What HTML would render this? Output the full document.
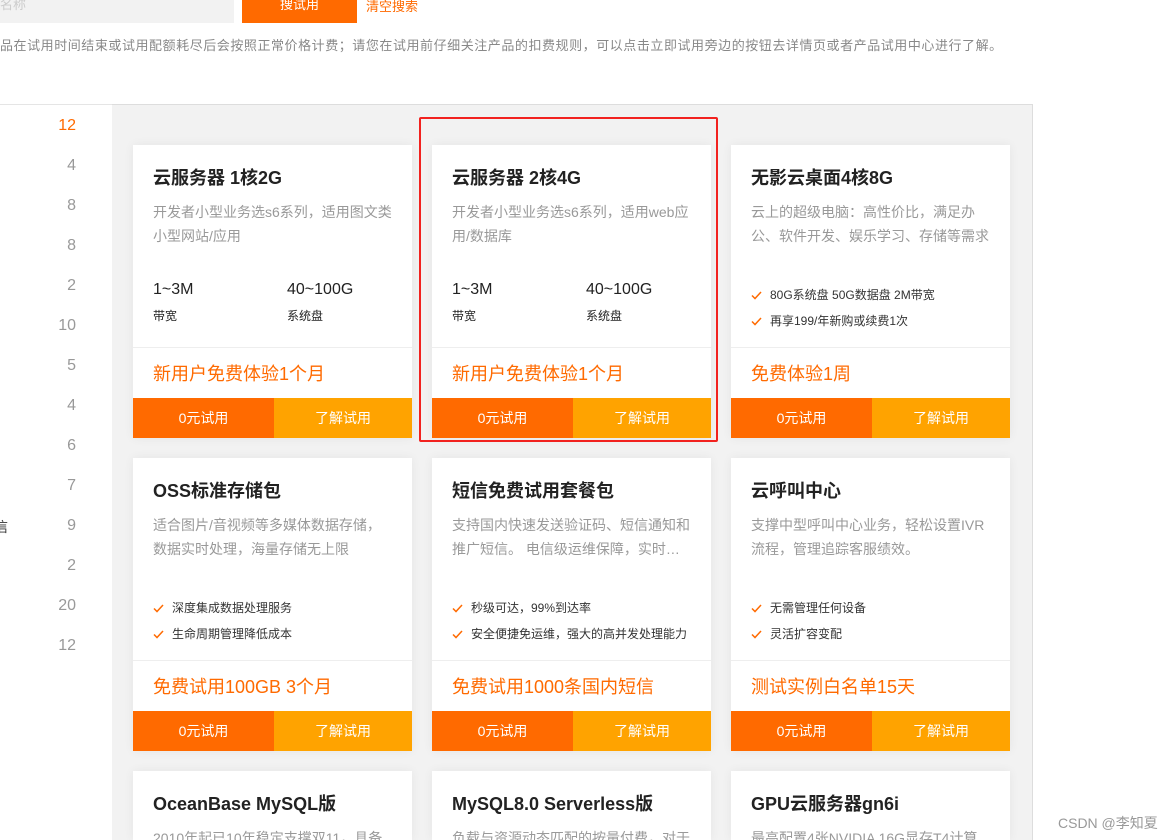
<!DOCTYPE html>
<html style="width:1174px;height:840px;overflow:hidden"><head><meta charset="utf-8"><style>
*{margin:0;padding:0;box-sizing:border-box}
body{width:1174px;height:840px;overflow:hidden;background:#fff;font-family:"Liberation Sans","Noto Sans CJK SC",sans-serif;position:relative}
.abs{position:absolute}
.inp{left:0;top:0;width:234px;height:23px;background:#f2f2f2;color:#ccc;font-size:13px;line-height:10px}
.sbtn{left:242px;top:0;width:115px;height:23px;background:#ff6a00;color:#fff;font-size:13px;text-align:center;line-height:10px}
.clr{left:366px;top:-4px;color:#ff6a00;font-size:13px}
.note{left:0;top:35px;font-size:13px;letter-spacing:0.55px;color:#888;white-space:nowrap}
.side{left:0;top:104px;width:112px;height:736px;background:#fff;border-top:1px solid #e5e5e5}
.num{left:40px;width:36px;text-align:right;font-size:16px;color:#999}
.panel{left:112px;top:104px;width:921px;height:736px;background:#f2f2f2;border-top:1px solid #ddd;border-right:1px solid #ddd}
.card{position:absolute;width:279px;height:293px;background:#fff;box-shadow:0 0 10px rgba(0,0,0,.06)}
.t{position:absolute;left:20px;top:19px;font-size:18px;font-weight:bold;color:#222}
.d{position:absolute;left:20px;top:55px;width:240px;font-size:14px;line-height:24px;color:#999}
.s{position:absolute;top:136px;font-size:16px;color:#222}
.sl{position:absolute;top:162px;font-size:12px;color:#222}
.ck{position:absolute;left:20px;font-size:12px;color:#333;white-space:nowrap}
.ck svg{vertical-align:-1px;margin-right:8px}
.hr{position:absolute;left:0;right:0;top:202px;height:1px;background:#eee}
.p{position:absolute;left:20px;top:215px;font-size:18px;color:#ff6a00}
.b1,.b2{position:absolute;top:253px;height:40px;line-height:40px;color:#fff;font-size:14px;text-align:center}
.b1{left:0;width:141px;background:#ff6a00}
.b2{left:141px;width:138px;background:#ffa300}
.red{left:419px;top:117px;width:299px;height:325px;border:2px solid #f2221f;border-radius:2px}
.wm{left:1058px;top:813px;font-size:14px;color:#999}
</style></head><body>
<div class="abs inp">名称</div>
<div class="abs sbtn">搜试用</div>
<div class="abs clr">清空搜索</div>
<div class="abs note">品在试用时间结束或试用配额耗尽后会按照正常价格计费；请您在试用前仔细关注产品的扣费规则，可以点击立即试用旁边的按钮去详情页或者产品试用中心进行了解。</div>
<div class="abs side"></div>
<div class="abs num" style="top:117px;color:#ff6a00">12</div>
<div class="abs num" style="top:157px">4</div>
<div class="abs num" style="top:197px">8</div>
<div class="abs num" style="top:237px">8</div>
<div class="abs num" style="top:277px">2</div>
<div class="abs num" style="top:317px">10</div>
<div class="abs num" style="top:357px">5</div>
<div class="abs num" style="top:397px">4</div>
<div class="abs num" style="top:437px">6</div>
<div class="abs num" style="top:477px">7</div>
<div class="abs num" style="top:517px">9</div>
<div class="abs num" style="top:557px">2</div>
<div class="abs num" style="top:597px">20</div>
<div class="abs num" style="top:637px">12</div>
<div class="abs" style="left:-6px;top:517px;font-size:14px;color:#333">信</div>
<div class="abs panel"></div>

<div class="card" style="left:133px;top:145px"><div class="t">云服务器 1核2G</div><div class="d">开发者小型业务选s6系列，适用图文类小型网站/应用</div><div class="s" style="left:20px">1~3M</div><div class="s" style="left:154px">40~100G</div><div class="sl" style="left:20px">带宽</div><div class="sl" style="left:154px">系统盘</div><div class="hr"></div><div class="p">新用户免费体验1个月</div><div class="b1">0元试用</div><div class="b2">了解试用</div></div>
<div class="card" style="left:432px;top:145px"><div class="t">云服务器 2核4G</div><div class="d">开发者小型业务选s6系列，适用web应用/数据库</div><div class="s" style="left:20px">1~3M</div><div class="s" style="left:154px">40~100G</div><div class="sl" style="left:20px">带宽</div><div class="sl" style="left:154px">系统盘</div><div class="hr"></div><div class="p">新用户免费体验1个月</div><div class="b1">0元试用</div><div class="b2">了解试用</div></div>
<div class="card" style="left:731px;top:145px"><div class="t">无影云桌面4核8G</div><div class="d">云上的超级电脑：高性价比，满足办公、软件开发、娱乐学习、存储等需求</div><div class="ck" style="top:141px"><svg width="11" height="9" viewBox="0 0 11 9"><path d="M1 4.5L4 7.5L10 1" fill="none" stroke="#ff6a00" stroke-width="1.5"/></svg>80G系统盘 50G数据盘 2M带宽</div><div class="ck" style="top:167px"><svg width="11" height="9" viewBox="0 0 11 9"><path d="M1 4.5L4 7.5L10 1" fill="none" stroke="#ff6a00" stroke-width="1.5"/></svg>再享199/年新购或续费1次</div><div class="hr"></div><div class="p">免费体验1周</div><div class="b1">0元试用</div><div class="b2">了解试用</div></div>

<div class="card" style="left:133px;top:458px"><div class="t">OSS标准存储包</div><div class="d">适合图片/音视频等多媒体数据存储，数据实时处理，海量存储无上限</div><div class="ck" style="top:141px"><svg width="11" height="9" viewBox="0 0 11 9"><path d="M1 4.5L4 7.5L10 1" fill="none" stroke="#ff6a00" stroke-width="1.5"/></svg>深度集成数据处理服务</div><div class="ck" style="top:167px"><svg width="11" height="9" viewBox="0 0 11 9"><path d="M1 4.5L4 7.5L10 1" fill="none" stroke="#ff6a00" stroke-width="1.5"/></svg>生命周期管理降低成本</div><div class="hr"></div><div class="p">免费试用100GB 3个月</div><div class="b1">0元试用</div><div class="b2">了解试用</div></div>
<div class="card" style="left:432px;top:458px"><div class="t">短信免费试用套餐包</div><div class="d">支持国内快速发送验证码、短信通知和推广短信。 电信级运维保障，实时…</div><div class="ck" style="top:141px"><svg width="11" height="9" viewBox="0 0 11 9"><path d="M1 4.5L4 7.5L10 1" fill="none" stroke="#ff6a00" stroke-width="1.5"/></svg>秒级可达，99%到达率</div><div class="ck" style="top:167px"><svg width="11" height="9" viewBox="0 0 11 9"><path d="M1 4.5L4 7.5L10 1" fill="none" stroke="#ff6a00" stroke-width="1.5"/></svg>安全便捷免运维，强大的高并发处理能力</div><div class="hr"></div><div class="p">免费试用1000条国内短信</div><div class="b1">0元试用</div><div class="b2">了解试用</div></div>
<div class="card" style="left:731px;top:458px"><div class="t">云呼叫中心</div><div class="d">支撑中型呼叫中心业务，轻松设置IVR流程，管理追踪客服绩效。</div><div class="ck" style="top:141px"><svg width="11" height="9" viewBox="0 0 11 9"><path d="M1 4.5L4 7.5L10 1" fill="none" stroke="#ff6a00" stroke-width="1.5"/></svg>无需管理任何设备</div><div class="ck" style="top:167px"><svg width="11" height="9" viewBox="0 0 11 9"><path d="M1 4.5L4 7.5L10 1" fill="none" stroke="#ff6a00" stroke-width="1.5"/></svg>灵活扩容变配</div><div class="hr"></div><div class="p">测试实例白名单15天</div><div class="b1">0元试用</div><div class="b2">了解试用</div></div>

<div class="card" style="left:133px;top:771px;height:69px"><div class="t">OceanBase MySQL版</div><div class="d">2010年起已10年稳定支撑双11，具备</div></div>
<div class="card" style="left:432px;top:771px;height:69px"><div class="t">MySQL8.0 Serverless版</div><div class="d">负载与资源动态匹配的按量付费，对于</div></div>
<div class="card" style="left:731px;top:771px;height:69px"><div class="t">GPU云服务器gn6i</div><div class="d">最高配置4张NVIDIA 16G显存T4计算</div></div>

<div class="abs red"></div>
<div class="abs wm">CSDN @李知夏</div>
</body></html>
